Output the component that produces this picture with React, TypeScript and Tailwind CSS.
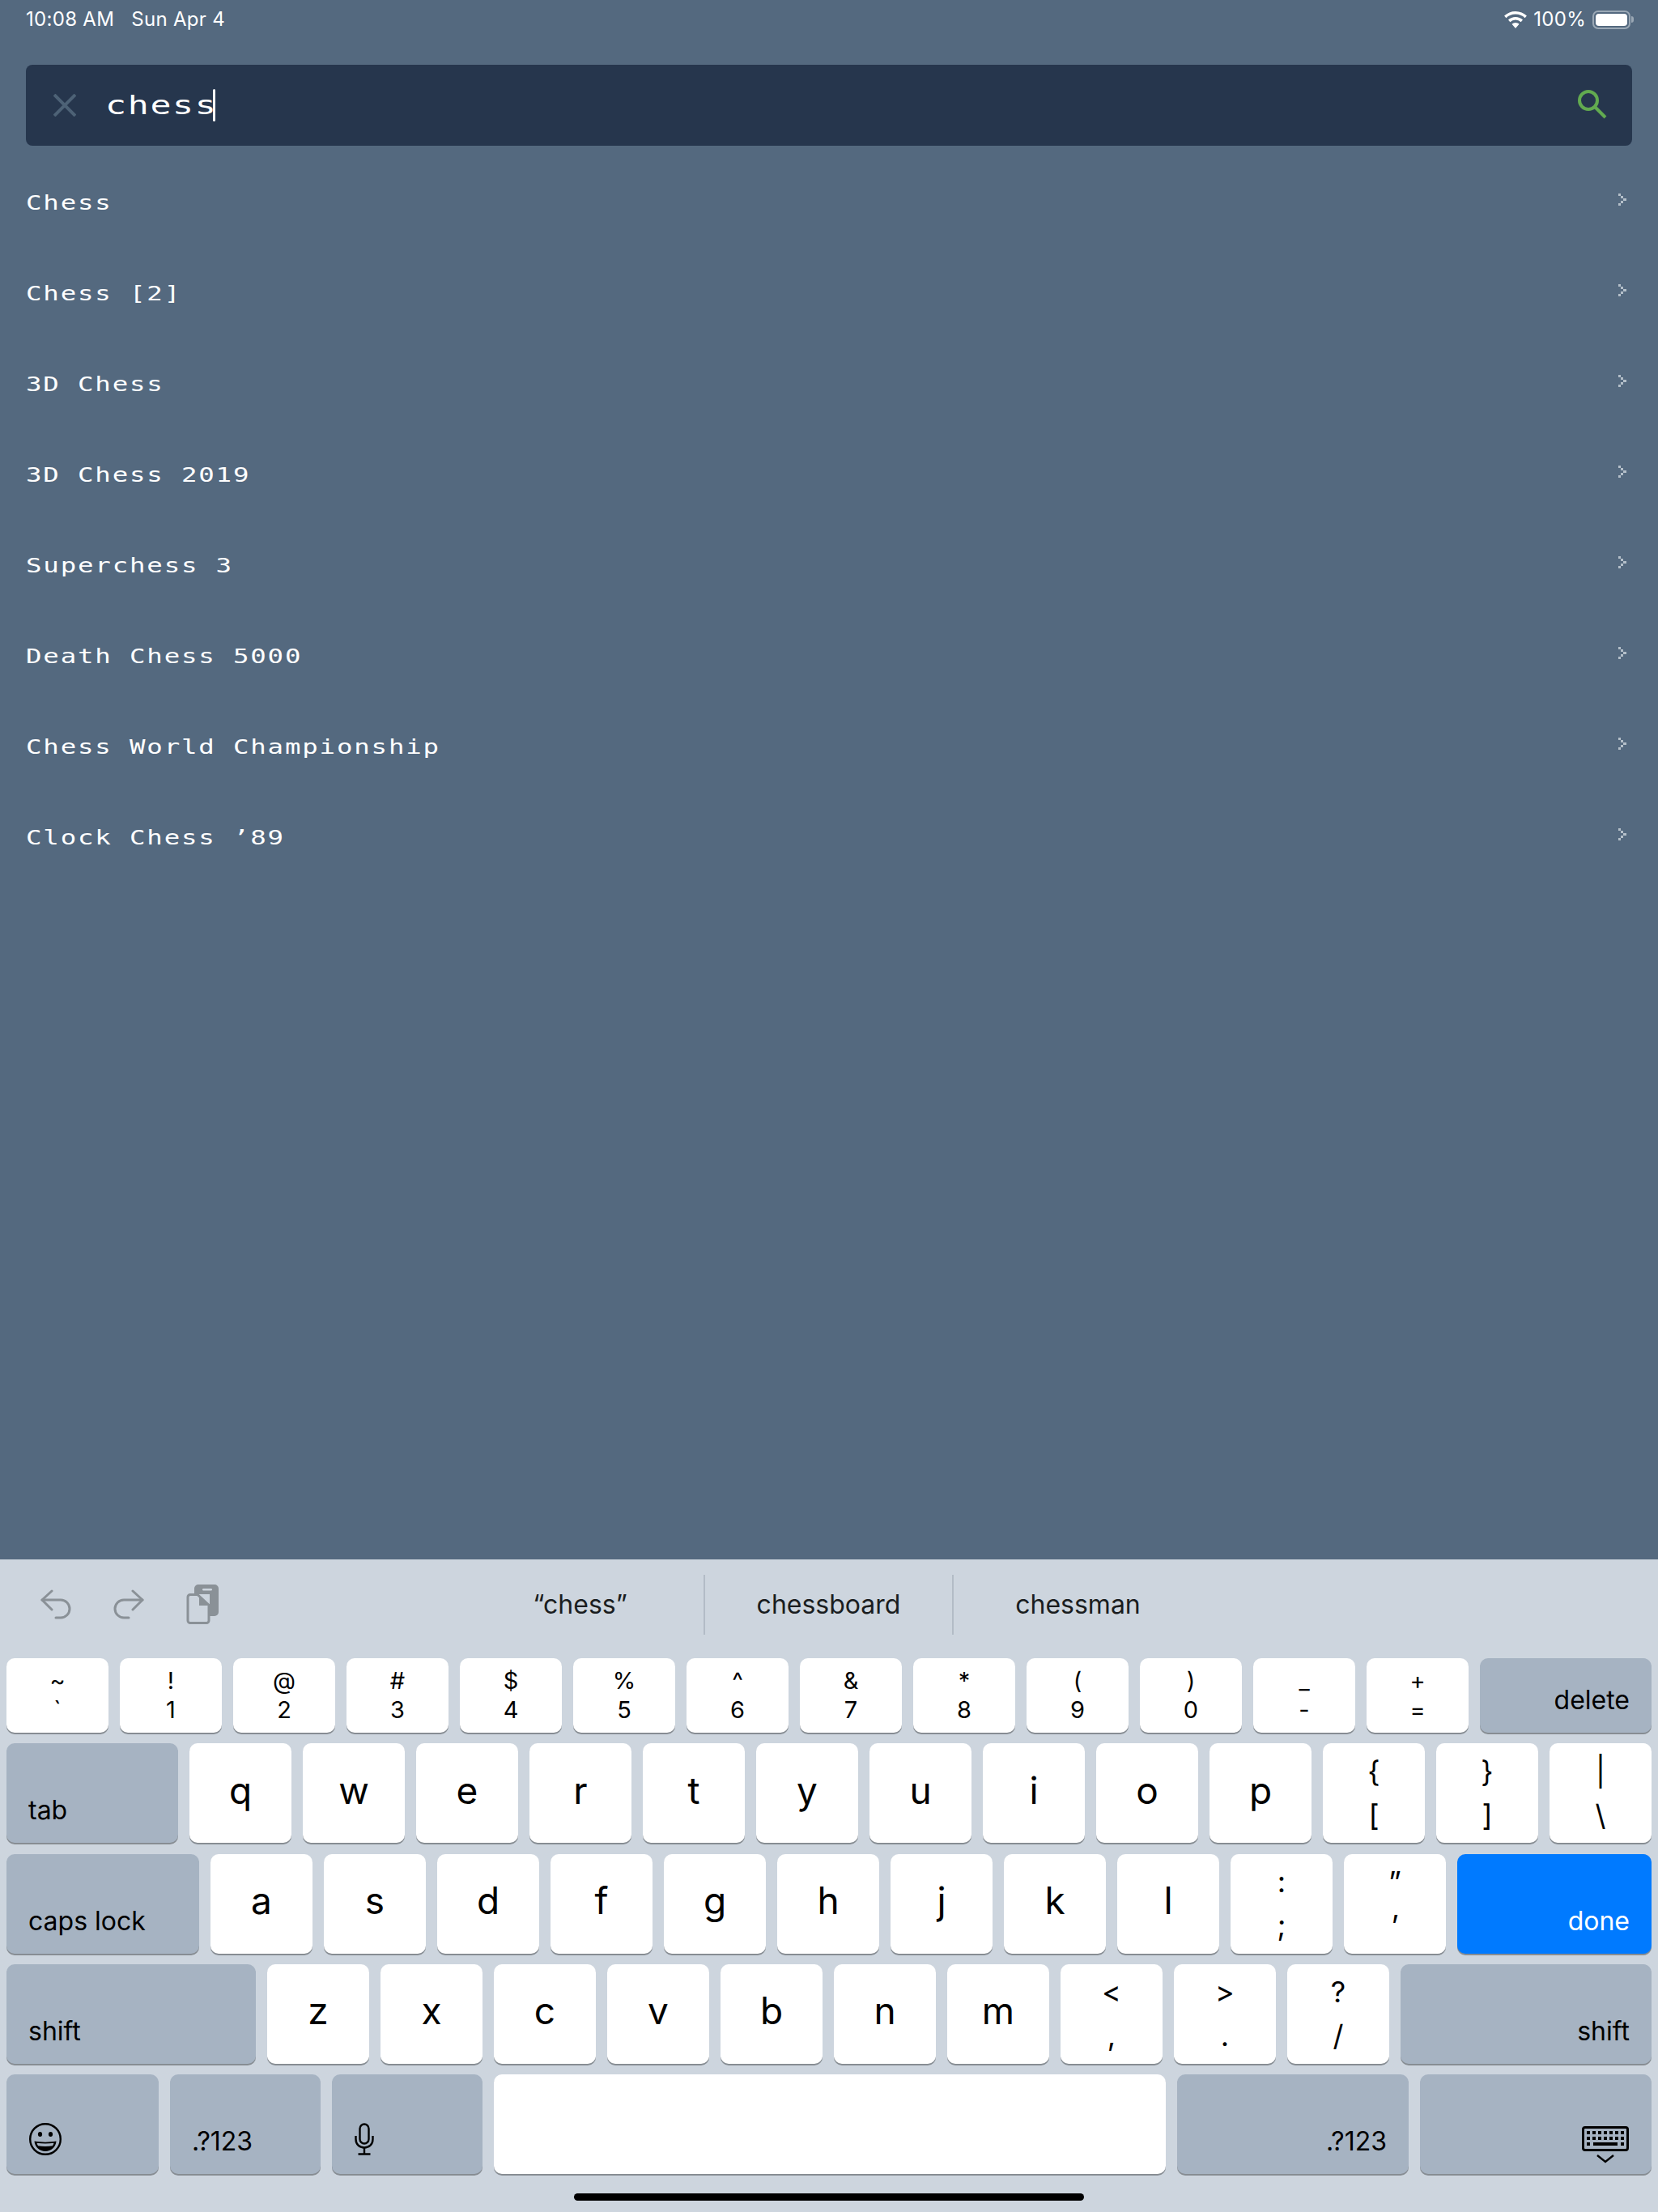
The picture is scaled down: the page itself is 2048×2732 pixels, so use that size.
import React from 'react';

const sans = 'font-["Inter","Liberation_Sans",sans-serif]';
const pixel = 'font-["DejaVu_Sans_Mono","Liberation_Mono",monospace]';

const games = [
  'Chess',
  'Chess [2]',
  '3D Chess',
  '3D Chess 2019',
  'Superchess 3',
  'Death Chess 5000',
  'Chess World Championship',
  'Clock Chess ’89',
];

const PixelChevron = () => (
  <svg width="10" height="15" viewBox="0 0 10 15" className="mt-[-7px] text-[#b4bfc9]" fill="currentColor">
    <rect x="0" y="0" width="3" height="3" />
    <rect x="3" y="3" width="3" height="3" />
    <rect x="6" y="6" width="4" height="3" />
    <rect x="3" y="9" width="3" height="3" />
    <rect x="0" y="12" width="3" height="3" />
  </svg>
);

const GameRow = ({ name }: { name: string }) => (
  <div className="flex h-[112px] items-center justify-between pl-[32px] pr-[39px]">
    <span className={`${pixel} origin-left scale-x-[1.35] whitespace-pre pt-[2px] text-[24px] leading-none tracking-[1.35px] text-white`}>{name}</span>
    <PixelChevron />
  </div>
);

const Key = ({ children, className = 'w-[126px]' }: { children?: React.ReactNode; className?: string }) => (
  <div className={`flex shrink-0 items-center justify-center rounded-[10px] bg-white text-black shadow-[0_2px_0_#878d93] ${className}`}>
    {children}
  </div>
);

const LetterKey = ({ label }: { label: string }) => (
  <Key>
    <span className="pb-[8px] text-[46px] leading-none">{label}</span>
  </Key>
);

const TallKey = ({ top, bottom }: { top: string; bottom: string }) => (
  <Key>
    <div className="flex flex-col items-center gap-[18px] text-[36px] leading-[36px]">
      <span>{top}</span>
      <span>{bottom}</span>
    </div>
  </Key>
);

const NumberKey = ({ top, bottom }: { top: string; bottom: string }) => (
  <Key>
    <div className="flex flex-col items-center gap-[6px] text-[29px] leading-[30px]">
      <span>{top}</span>
      <span>{bottom}</span>
    </div>
  </Key>
);

const ActionKey = ({
  label,
  className,
  right,
  blue,
  children,
}: {
  label?: string;
  className: string;
  right?: boolean;
  blue?: boolean;
  children?: React.ReactNode;
}) => (
  <div
    className={`flex items-end rounded-[10px] pb-[24px] text-[32px] leading-none shadow-[0_2px_0_#878d93] ${
      blue ? 'bg-[#007aff] text-white' : 'bg-[#a6b3c2] text-black'
    } ${right ? 'justify-end pr-[27px]' : 'justify-start pl-[27px]'} ${className}`}
  >
    {label}
    {children}
  </div>
);

const numberRow = [
  ['~', '`'],
  ['!', '1'],
  ['@', '2'],
  ['#', '3'],
  ['$', '4'],
  ['%', '5'],
  ['^', '6'],
  ['&', '7'],
  ['*', '8'],
  ['(', '9'],
  [')', '0'],
  ['_', '-'],
  ['+', '='],
];

const EmojiIcon = () => (
  <svg width="40" height="40" viewBox="0 0 40 40">
    <ellipse cx="20" cy="20" rx="18.800" ry="18.800" fill="none" stroke="black" strokeWidth="2.400" />
    <ellipse cx="13.500" cy="14" rx="2.600" ry="3" fill="black" />
    <ellipse cx="26.500" cy="14" rx="2.600" ry="3" fill="black" />
    <path d="M6.500 22.500c8 1.500 19 1.500 27 0-.5 7.500-6.500 12.500-13.500 12.500S7 30 6.500 22.500z" fill="black" />
    <path d="M9.500 24.800c6.500 1 14.500 1 21 0-.4 1.600-.9 2.600-1.600 3.500-5.500.8-12.300.8-17.800 0-.7-.9-1.200-1.900-1.600-3.500z" fill="#a6b3c2" />
  </svg>
);

const MicIcon = () => (
  <svg width="24" height="40" viewBox="0 0 24 40" fill="none" stroke="black" strokeWidth="2.400">
    <rect x="6.500" y="1.500" width="11" height="24" rx="5.500" />
    <path d="M1.500 16v4c0 6.500 4.500 10.500 10.500 10.500S22.500 26.500 22.500 20v-4" />
    <path d="M12 30.500V38M4.500 38.500h15" />
  </svg>
);

const KeyboardIcon = () => (
  <svg width="58" height="46" viewBox="0 0 58 46" fill="black">
    <rect x="1.500" y="1.500" width="55" height="28" rx="2.500" fill="none" stroke="black" strokeWidth="3" />
    {[6, 13, 20, 27, 34, 41, 48].map(x => (
      <React.Fragment key={x}>
        <rect x={x} y="6" width="4" height="4" />
        <rect x={x} y="13" width="4" height="4" />
      </React.Fragment>
    ))}
    <rect x="6" y="20" width="4" height="4" />
    <rect x="14" y="20" width="30" height="4" />
    <rect x="48" y="20" width="4" height="4" />
    <path d="M19 36l10 8 10-8" fill="none" stroke="black" strokeWidth="2.400" />
  </svg>
);

const Keyboard = () => (
  <div className={`${sans} flex h-[806px] flex-col bg-[#cdd5de]`}>
    <div className="flex h-[122px] items-center pb-[10px]">
      <div className="flex w-[564px] items-center pl-[50px] text-[#8a9197]">
        <svg width="38" height="38" viewBox="0 0 38 38" fill="none" stroke="currentColor" strokeWidth="3" strokeLinecap="round" strokeLinejoin="round">
          <path d="M14 2 2 13l12 12" />
          <path d="M2 13h23a11 11 0 0 1 0 22h-6" />
        </svg>
        <svg className="ml-[52px]" width="38" height="38" viewBox="0 0 38 38" fill="none" stroke="currentColor" strokeWidth="3" strokeLinecap="round" strokeLinejoin="round">
          <path d="M24 2l12 11-12 12" />
          <path d="M36 13H13a11 11 0 0 0 0 22h6" />
        </svg>
        <svg className="ml-[52px]" width="40" height="50" viewBox="0 0 40 50">
          <path d="M10 5a5 5 0 0 1 5-5h20a5 5 0 0 1 5 5v29a5 5 0 0 1-5 5h-6V12H10z" fill="#8a9197" />
          <rect x="20" y="5" width="12" height="2.500" rx="1.200" fill="#cdd5de" />
          <path d="M5 12.500h9l14 13v19a3 3 0 0 1-3 3H5a3 3 0 0 1-3-3v-29a3 3 0 0 1 3-3z" fill="#cdd5de" stroke="#8a9197" strokeWidth="3" />
          <path d="M16 13l13 13H16z" fill="#8a9197" />
        </svg>
      </div>
      <div className="flex text-center text-[32px] leading-[74px] text-[#1a1d20]">
        <div className="w-[307px] border-r-2 border-[#b3bcc6]">“chess”</div>
        <div className="w-[307px] border-r-2 border-[#b3bcc6]">chessboard</div>
        <div className="w-[307px]">chessman</div>
      </div>
    </div>

    <div className="flex flex-col gap-[13.250px] px-[8px]">
      <div className="flex h-[92px] gap-[14px]">
        {numberRow.map(([top, bottom]) => (
          <NumberKey key={bottom} top={top} bottom={bottom} />
        ))}
        <ActionKey label="delete" right className="flex-1" />
      </div>

      <div className="flex h-[123px] gap-[14px]">
        <ActionKey label="tab" className="w-[212px]" />
        {'qwertyuiop'.split('').map(c => (
          <LetterKey key={c} label={c} />
        ))}
        <TallKey top="{" bottom="[" />
        <TallKey top="}" bottom="]" />
        <TallKey top="|" bottom="\" />
      </div>

      <div className="flex h-[123px] gap-[14px]">
        <ActionKey label="caps lock" className="w-[238px]" />
        {'asdfghjkl'.split('').map(c => (
          <LetterKey key={c} label={c} />
        ))}
        <TallKey top=":" bottom=";" />
        <TallKey top="”" bottom="’" />
        <ActionKey label="done" right blue className="flex-1" />
      </div>

      <div className="flex h-[123px] gap-[14px]">
        <ActionKey label="shift" className="w-[308px]" />
        {'zxcvbnm'.split('').map(c => (
          <LetterKey key={c} label={c} />
        ))}
        <TallKey top="<" bottom="," />
        <TallKey top=">" bottom="." />
        <TallKey top="?" bottom="/" />
        <ActionKey label="shift" right className="flex-1" />
      </div>

      <div className="flex h-[123px] gap-[14px]">
        <ActionKey className="w-[188px] !pb-[23px] !pl-[28px]">
          <EmojiIcon />
        </ActionKey>
        <ActionKey label=".?123" className="w-[186px]" />
        <ActionKey className="w-[186px] !pb-[23px] !pl-[28px]">
          <MicIcon />
        </ActionKey>
        <Key className="w-[830px]" />
        <ActionKey label=".?123" right className="w-[286px]" />
        <ActionKey right className="flex-1 !pb-[13px] !pr-[28px]">
          <KeyboardIcon />
        </ActionKey>
      </div>
    </div>

    <div className="mt-[24px] flex justify-center">
      <div className="h-[9px] w-[630px] rounded-full bg-black" />
    </div>
  </div>
);

export default function App() {
  return (
    <div className="flex h-[2732px] w-[2048px] flex-col overflow-hidden bg-[#54697f]">
      <div className={`${sans} flex h-[48px] items-center justify-between pl-[32px] pr-[30px] text-[24px] tracking-[0.3px] text-white`}>
        <div className="flex gap-[21px]">
          <span>10:08 AM</span>
          <span>Sun Apr 4</span>
        </div>
        <div className="flex items-center gap-[8px]">
          <svg width="28" height="21" viewBox="0 0 28 21" fill="white">
            <path d="M14 0c5.400 0 10.300 2.100 13.900 5.600l-2.300 2.600A16.700 16.700 0 0 0 14 3.600 16.700 16.700 0 0 0 2.400 8.200L.1 5.600A20 20 0 0 1 14 0z" />
            <path d="M14 7c3.500 0 6.600 1.300 9 3.600l-2.300 2.600A9.800 9.800 0 0 0 14 10.500a9.800 9.800 0 0 0-6.700 2.700L5 10.600A13 13 0 0 1 14 7z" />
            <path d="M14 14c1.800 0 3.400.700 4.500 1.800L14 21l-4.500-5.200A6.400 6.400 0 0 1 14 14z" />
          </svg>
          <span className="leading-none">100%</span>
          <div className="flex items-center">
            <div className="flex h-[23px] w-[47px] rounded-[7px] border-2 border-[#9ba8b5] p-[2px]">
              <div className="flex-1 rounded-[4px] bg-white" />
            </div>
            <div className="ml-[1px] h-[8px] w-[3px] rounded-r-full bg-[#9ba8b5]" />
          </div>
        </div>
      </div>

      <div className="mx-[32px] mt-[32px] flex h-[100px] items-center rounded-[8px] bg-[#26364d] pl-[34px] pr-[31px]">
        <svg width="28" height="28" viewBox="0 0 28 28" stroke="#4d6276" strokeWidth="4">
          <path d="M1 1l26 26M27 1 1 27" />
        </svg>
        <div className="ml-[36px] w-[133px]">
          <span className={`${pixel} inline-block origin-left scale-x-[1.35] text-[32px] leading-none tracking-[1.25px] text-white`}>chess</span>
        </div>
        <div className="h-[40px] w-[3px] rounded-full bg-white" />
        <svg className="ml-auto mt-[-2px]" width="36" height="36" viewBox="0 0 36 36" fill="none" stroke="#62aa50" strokeWidth="4">
          <circle cx="13" cy="13" r="11" />
          <path d="M21 21l13 13" />
        </svg>
      </div>

      <div className="mt-[14px] flex-1">
        {games.map(g => (
          <GameRow key={g} name={g} />
        ))}
      </div>

      <Keyboard />
    </div>
  );
}
